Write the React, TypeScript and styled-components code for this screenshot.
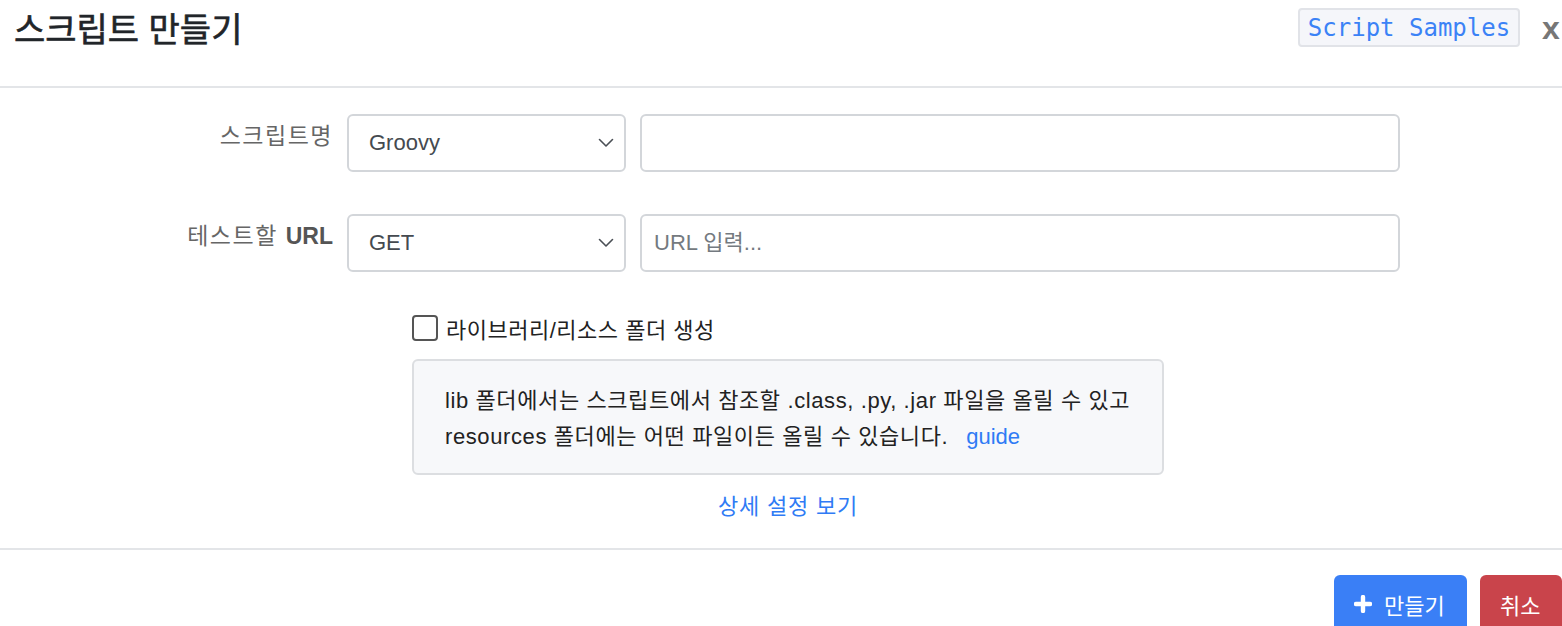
import React from 'react'
import styled, { createGlobalStyle } from 'styled-components'

const GlobalStyle = createGlobalStyle`
  html, body {
    margin: 0;
    padding: 0;
    background: #ffffff;
  }
  body {
    font-family: "Liberation Sans", "Noto Sans CJK KR", sans-serif;
    color: #212529;
    overflow: hidden;
  }
`;

const Modal = styled.div`
  width: 1562px;
  height: 626px;
  overflow: hidden;
  display: flex;
  flex-direction: column;

  & > * {
    flex-shrink: 0;
  }
`;

const Header = styled.header`
  height: 86px;
  display: flex;
  align-items: flex-start;
  border-bottom: 2px solid #e3e5e8;
  padding-left: 14px;
`;

const Title = styled.h1`
  margin: 10px 0 0;
  font-size: 34px;
  font-weight: 400;
  -webkit-text-stroke: 0.6px #212529;
  color: #212529;
  flex: 1;
  line-height: 40px;
`;

const SamplesButton = styled.button`
  margin-top: 8px;
  height: 39px;
  width: 222px;
  padding: 0;
  border: 2px solid #e1e3e8;
  border-radius: 4px;
  background: #f5f6fa;
  color: #3b82f6;
  font-family: "DejaVu Sans Mono", "Liberation Mono", monospace;
  font-size: 24px;
  cursor: pointer;
`;

const CloseButton = styled.button`
  margin: 10px 0 0 22px;
  padding: 0;
  border: none;
  background: none;
  color: #777;
  font-family: "Liberation Sans", sans-serif;
  font-weight: 700;
  font-size: 32px;
  line-height: 36px;
  width: 20px;
  text-align: left;
  overflow: hidden;
`;

const Body = styled.main`
  height: 462px;
  padding-top: 26px;
  box-sizing: border-box;
  border-bottom: 2px solid #e3e5e8;
`;

const FormRow = styled.div`
  display: grid;
  grid-template-columns: 333px 279px 760px;
  column-gap: 14px;
  height: 58px;
  margin-bottom: 42px;
`;

const Label = styled.label`
  text-align: right;
  font-size: 23px;
  letter-spacing: 1.5px;
  color: #666;
  padding-top: 7px;
  line-height: 30px;

  b {
    font-weight: 700;
    letter-spacing: 0;
    color: #555;
  }
`;

const SelectBox = styled.div`
  position: relative;
  border: 2px solid #d3d6da;
  border-radius: 6px;
  display: flex;
  align-items: center;
  padding-left: 20px;
  font-size: 22px;
  color: #454a50;
  background: #fff;

  svg {
    position: absolute;
    right: 10px;
    top: 50%;
    transform: translateY(-50%);
  }
`;

const TextInput = styled.input`
  border: 2px solid #d3d6da;
  border-radius: 6px;
  padding: 0 12px;
  font-family: "Liberation Sans", "Noto Sans CJK KR", sans-serif;
  font-size: 22px;
  color: #454a50;
  outline: none;

  &::placeholder {
    color: #747a80;
  }
`;

const Section = styled.div`
  margin-left: 412px;
  width: 752px;
`;

const CheckRow = styled.label`
  display: flex;
  align-items: center;
  gap: 8px;
  height: 28px;
  margin-top: 4px;
  font-size: 22px;
  letter-spacing: 0.5px;
  color: #222;
`;

const CheckBox = styled.span`
  width: 22px;
  height: 22px;
  border: 2px solid #555;
  border-radius: 4px;
  background: #fff;
`;

const InfoBox = styled.div`
  margin-top: 17px;
  height: 116px;
  box-sizing: border-box;
  border: 2px solid #dcdee1;
  border-radius: 6px;
  background: #f7f8fa;
  padding: 22px 31px;
  font-size: 22px;
  letter-spacing: 0.6px;
  line-height: 36px;
  color: #222;
  white-space: nowrap;
`;

const Link = styled.a<{ $gap?: number }>`
  color: #2f7bf5;
  text-decoration: none;
  letter-spacing: 0;
  margin-left: ${({ $gap }) => $gap ?? 0}px;
`;

const DetailLink = styled.div`
  text-align: center;
  margin-top: 13px;
  font-size: 22px;
  letter-spacing: 0.8px;
  color: #2f7bf5;
`;

const Footer = styled.footer`
  display: flex;
  justify-content: flex-end;
  gap: 13px;
  padding-top: 25px;
`;

const ActionButton = styled.button<{ $tone: 'primary' | 'danger' }>`
  height: 60px;
  padding: 0 20px;
  border: none;
  border-radius: 6px;
  background: ${({ $tone }) => ($tone === 'primary' ? '#3a7ff6' : '#c9444b')};
  color: #fff;
  font-family: "Liberation Sans", "Noto Sans CJK KR", sans-serif;
  font-size: 22px;
  display: flex;
  align-items: flex-start;
  padding-top: 13px;
  gap: 12px;
  box-sizing: border-box;
`;

const Chevron = () => (
  <svg width="16" height="10" viewBox="0 0 16 10" fill="none">
    <polyline points="1.5,1.5 8,8 14.5,1.5" stroke="#4a4f55" strokeWidth="1.6" strokeLinecap="round" strokeLinejoin="round" />
  </svg>
);

const PlusIcon = () => (
  <svg width="18" height="18" viewBox="0 0 18 18" style={{ marginTop: 7 }}>
    <path d="M9 2v14M2 9h14" stroke="#fff" strokeWidth="4.4" strokeLinecap="round" />
  </svg>
);

const App: React.FC = () => {
  return (
    <>
      <GlobalStyle />
      <Modal>
        <Header>
          <Title>스크립트 만들기</Title>
          <SamplesButton>Script Samples</SamplesButton>
          <CloseButton>x</CloseButton>
        </Header>

        <Body>
          <FormRow>
            <Label>스크립트명</Label>
            <SelectBox>
              Groovy
              <Chevron />
            </SelectBox>
            <TextInput />
          </FormRow>

          <FormRow>
            <Label>
              테스트할 <b>URL</b>
            </Label>
            <SelectBox>
              GET
              <Chevron />
            </SelectBox>
            <TextInput placeholder="URL 입력..." />
          </FormRow>

          <Section>
            <CheckRow>
              <CheckBox />
              라이브러리/리소스 폴더 생성
            </CheckRow>
            <InfoBox>
              lib 폴더에서는 스크립트에서 참조할 .class, .py, .jar 파일을 올릴 수 있고
              <br />
              resources 폴더에는 어떤 파일이든 올릴 수 있습니다.
              <Link $gap={18}>guide</Link>
            </InfoBox>
            <DetailLink>상세 설정 보기</DetailLink>
          </Section>
        </Body>

        <Footer>
          <ActionButton $tone="primary" style={{ width: 133 }}>
            <PlusIcon />
            만들기
          </ActionButton>
          <ActionButton $tone="danger" style={{ width: 82 }}>
            취소
          </ActionButton>
        </Footer>
      </Modal>
    </>
  );
};

export default App;
